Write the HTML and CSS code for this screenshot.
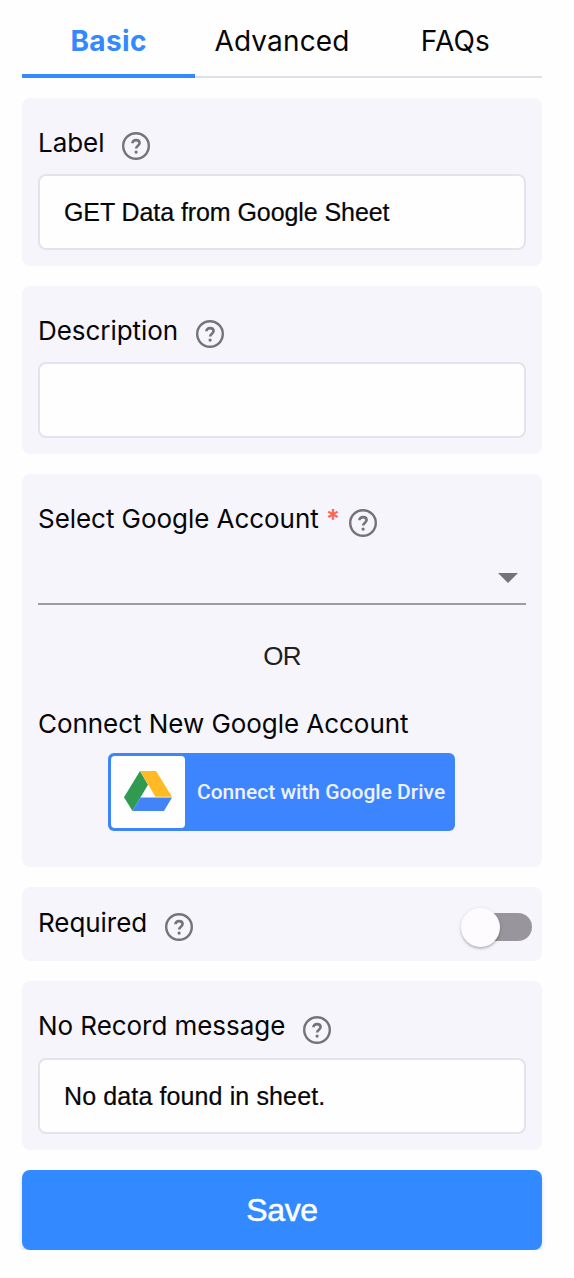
FILE: index.html
```html
<!DOCTYPE html>
<html lang="en">
<head>
<meta charset="utf-8">
<title>Field settings</title>
<link rel="stylesheet" href="styles.css">
</head>
<body>
<svg class="defs" width="0" height="0" aria-hidden="true">
  <symbol id="help" viewBox="0 0 28 28">
    <circle cx="14" cy="14" r="12.8" fill="none" stroke="#747378" stroke-width="2.4"/>
    <path d="M10.4 11.2C10.4 9.3 11.9 8.1 14 8.1s3.6 1.2 3.6 3c0 2.6-3.5 2.6-3.5 5.5" fill="none" stroke="#747378" stroke-width="2.6"/>
    <circle cx="14.1" cy="20.1" r="1.6" fill="#747378"/>
  </symbol>
</svg>
<main class="panel">
  <nav class="tabs">
    <a class="tab tab-active">Basic</a>
    <a class="tab">Advanced</a>
    <a class="tab">FAQs</a>
  </nav>

  <section class="card">
    <div class="row"><label class="name">Label</label><svg class="help"><use href="#help"/></svg></div>
    <div class="input">GET Data from Google Sheet</div>
  </section>

  <section class="card">
    <div class="row"><label class="name">Description</label><svg class="help"><use href="#help"/></svg></div>
    <div class="input"></div>
  </section>

  <section class="card card-account">
    <div class="row row-required"><label class="name">Select Google Account <span class="star">*</span></label><svg class="help"><use href="#help"/></svg></div>
    <div class="select"><svg class="arrow" viewBox="0 0 20 10"><path d="M0 0h20L10 10z" fill="#747378"/></svg></div>
    <div class="or">OR</div>
    <div class="name connect-title">Connect New Google Account</div>
    <button class="drive">
      <span class="drive-logo">
        <svg width="48" height="40" viewBox="0 0 48 41" preserveAspectRatio="none">
          <path d="M16 0L24 14 8.5 41 0 27z" fill="#2f9a50"/>
          <path d="M16 0H32L48 26.3H31.5z" fill="#ffba24"/>
          <path d="M16.5 27.2H48L40 41H8.5z" fill="#4284f8"/>
        </svg>
      </span>
      <span class="drive-text">Connect with Google Drive</span>
    </button>
  </section>

  <section class="card card-toggle">
    <div class="row"><label class="name">Required</label><svg class="help"><use href="#help"/></svg></div>
    <div class="switch"><span class="knob"></span></div>
  </section>

  <section class="card card-message">
    <div class="row"><label class="name">No Record message</label><svg class="help"><use href="#help"/></svg></div>
    <div class="input input-message">No data found in sheet.</div>
  </section>

  <button class="save">Save</button>
</main>
</body>
</html>
```
FILE: styles.css
```css
* { box-sizing: border-box; }
body { margin: 0; background: #fefefe; color: #060609; font-family: Inter, sans-serif; }
.defs { display: block; }
.panel { width: 520px; margin-left: 22px; display: flex; flex-direction: column; gap: 20px; }
.tabs { display: flex; height: 78px; border-bottom: 2px solid #dde1e6; }
.tab { flex: 1; height: 78px; padding-top: 24px; text-align: center; font-size: 28px; line-height: 34px; letter-spacing: 0.15px; white-space: nowrap; }
.tab-active { color: #3389ff; font-weight: 700; letter-spacing: 0.4px; border-bottom: 4px solid #3389ff; }
.card { height: 168px; padding: 0 16px; border-radius: 8px; background: #f6f5fb; }
.row { display: flex; align-items: flex-start; gap: 17.5px; height: 76px; padding-top: 29px; }
.name { font-size: 26px; line-height: 32px; letter-spacing: -0.05px; white-space: nowrap; }
.help { width: 28px; height: 28px; margin-top: 5px; }
.input { display: flex; align-items: center; height: 76px; padding-left: 24px; border: 2px solid #e4e3e9; border-radius: 8px; background: #fefefe; font: 25px "Liberation Sans", Arial, sans-serif; letter-spacing: -0.08px; -webkit-text-stroke: 0.2px #060609; }
.input-message { letter-spacing: 0.12px; }
.card-account { height: 393px; }
.row-required { gap: 9px; }
.row-required .help, .card-message .help { margin-top: 6px; }
.star { color: #ff6353; font-weight: 600; }
.select { display: flex; justify-content: flex-end; height: 55px; padding: 23px 8px 0 0; border-bottom: 2px solid #9c9ba2; }
.arrow { width: 20px; height: 10px; }
.or { margin-top: 35px; text-align: center; font: 26px/32px "Liberation Sans", Arial, sans-serif; letter-spacing: -0.8px; color: #202024; }
.connect-title { margin-top: 36px; }
.drive { display: flex; align-items: center; gap: 12px; width: 347px; height: 78px; margin: 13px 0 0 70px; padding: 0 0 0 3px; border: 0; border-radius: 6px; background: #3d85ff; }
.drive-logo { display: flex; align-items: center; justify-content: center; width: 74px; height: 72px; padding-bottom: 2px; border-radius: 4px; background: #fefefe; }
.drive-text { color: #eef1ff; font: 500 21px Roboto, sans-serif; white-space: nowrap; }
.card-toggle { display: flex; justify-content: space-between; height: 74px; padding-right: 10px; }
.card-toggle .row { padding-top: 20px; }
.card-toggle .help { margin-top: 6px; }
.switch { display: flex; align-items: center; width: 66px; height: 28px; margin: 26px 0 0; border-radius: 14px; background: #98969c; }
.knob { width: 39px; height: 39px; flex: none; margin: 1px 0 0 -5px; border-radius: 50%; background: #fdfbfe; box-shadow: 0 2px 2px rgba(0,0,0,.18), 0 1px 5px rgba(0,0,0,.1); }
.card-message { height: 169px; }
.card-message .row { height: 77px; }
.save { height: 80px; padding: 0; border: 0; border-radius: 8px; background: #3389ff; color: #fefefe; font: 32px "Liberation Sans", Arial, sans-serif; letter-spacing: -0.3px; -webkit-text-stroke: 0.5px #fefefe; box-shadow: 0 3px 4px rgba(51,137,255,.25); }
```
